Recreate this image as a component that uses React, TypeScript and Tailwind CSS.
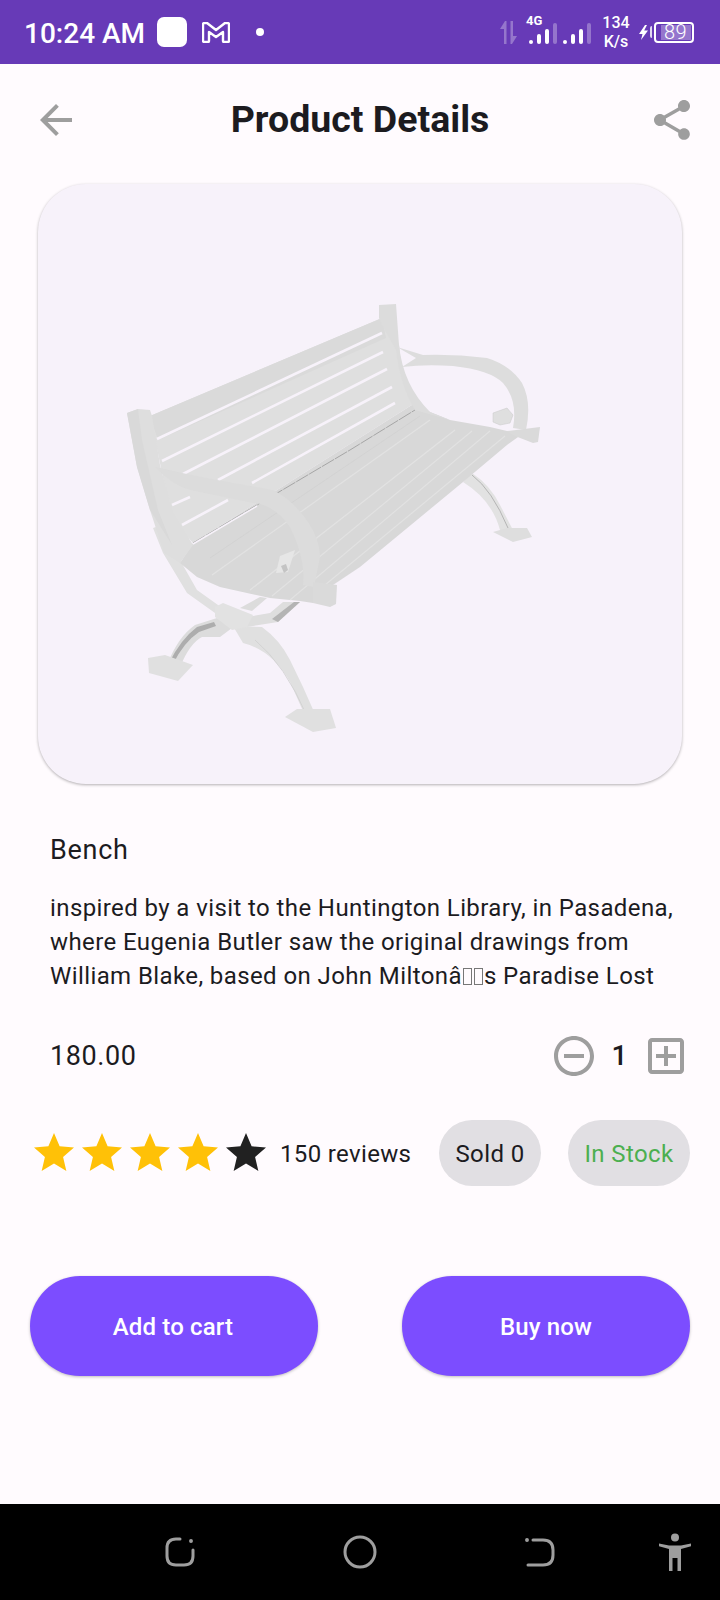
function Bench() {
  return (
    <svg viewBox="38 184 644 600" className="block w-full h-full">
      {/* far leg */}
      <path d="M463 482 L472 473 Q490 485 500 505 L514 532 L500 530 Q492 500 463 482Z" fill="#e2e2e2" />
      <path d="M472 475 Q492 490 508 528" fill="none" stroke="#a8a8a8" strokeWidth="0.8" />
      <path d="M493 532 L507 528 L527 528 L532 537 L513 542Z" fill="#dedede" />
      {/* back struts and front legs */}
      <path d="M153 528 L163 553 L187 593 L215 613 L225 610 L197 590 L180 560 L162 525Z" fill="#e0e0e0" />
      <path d="M240 608 L260 597 L267 598 L252 611Z" fill="#dcdcdc" />
      <path d="M247 617 L270 613 L283 602 L300 602 L278 622 L247 627Z" fill="#dedede" />
      <path d="M278 622 L300 602 L294 602 L272 619Z" fill="#b4b4b4" />
      <path d="M217 618 L195 625 Q178 637 168 663 L180 667 Q190 643 202 637 L220 637 L232 628Z" fill="#dcdcdc" />
      <path d="M214 622 L197 627 Q181 639 169 663 L173 664 Q184 642 199 632 L216 626Z" fill="#adadad" />
      <path d="M148 658 L165 655 L193 665 L178 681 L149 673Z" fill="#e0e0e0" />
      <path d="M233 626 L262 627 Q280 640 290 660 L303 687 L315 714 L307 720 L290 682 Q272 650 243 643Z" fill="#e0e0e0" />
      <path d="M255 640 Q285 665 307 716" fill="none" stroke="#cfcfcf" strokeWidth="0.8" />
      <path d="M285 717 L297 709 L330 709 L336 728 L313 732Z" fill="#e0e0e0" />
      <path d="M215 607 L223 603 L253 615 L247 627 L232 630 L215 617Z" fill="#e2e2e2" />
      {/* seat */}
      <path d="M193 543 L415 403 L430 412 L450 420 L490 427 L507 431 L525 432 L507 445 L463 482 L360 567 L333 585 L313 603 L300 601 L270 598 L220 587 L197 577 L180 563Z" fill="#d8d8d8" />
      <g stroke="#e2e2e2" strokeWidth="1.2" fill="none">
        <path d="M212 575 L430 420" />
        <path d="M250 590 L455 430" />
        <path d="M272 596 L472 431" />
        <path d="M290 600 L490 431" />
        <path d="M325 585 L505 436" />
      </g>
      <path d="M210 558 L420 416" fill="none" stroke="#d0d0d0" strokeWidth="0.8" />
      {/* backrest */}
      <path d="M150 416 L382 318 L399 345 L402 370 L415 403 L193 543 L172 520 Z" fill="#dfdfdf" />
      <path d="M150 416 L382 318 L386 338 L158 440Z" fill="#dadada" />
      <g stroke="#f7f2fa" fill="none" strokeWidth="2.6">
        <path d="M157 439 L382 333" />
        <path d="M162 461 L383 352" />
        <path d="M183 474 L387 369" />
        <path d="M218 480 L392 387" />
        <path d="M252 483 L395 403" />
        <path d="M172 505 L190 497" />
        <path d="M182 525 L228 500" />
      </g>
      <path d="M193 543 L257 505 L350 450 L415 410" fill="none" stroke="#8f8f8f" strokeWidth="0.7" strokeDasharray="14 1" />
      <path d="M193 544 L257 506" fill="none" stroke="#f7f2fa" strokeWidth="1.5" />
      {/* side posts */}
      <path d="M379 305 L396 304 L399 345 Q403 385 430 412 L450 420 L415 410 Q400 385 396 350 L382 325 L379 318Z" fill="#dcdcdc" />
      <path d="M127 413 L138 409 L150 410 L152 416 L156 440 L160 465 L172 510 L193 545 L180 563 L164 553 L150 510 L137 467Z" fill="#dedede" />
      <path d="M127 413 L138 409 L142 440 L158 510 L172 545 L150 510 L137 467Z" fill="#d9d9d9" />
      {/* far arm */}
      <path d="M397 347 L423 355 Q455 354 487 358 Q510 365 522 383 Q532 402 526 430 L513 428 Q518 400 503 383 Q490 370 453 366 Q425 364 402 367 L416 358Z" fill="#dddddd" />
      <path d="M507 431 L540 427 L538 442 L533 443 L515 436Z" fill="#dadada" />
      <path d="M493 413 L507 408 L513 415 L510 423 L500 425 L493 422Z" fill="#dfdfdf" stroke="#c9c9c9" strokeWidth="0.5" />
      {/* near arm */}
      <path d="M155 467 L182 473 L217 480 L273 490 Q293 500 308 522 Q320 540 320 557 L314 587 L303 585 Q306 560 290 527 Q275 505 253 503 L190 490 Q172 485 155 467Z" fill="#dcdcdc" />
      <path d="M280 556 L295 550 L288 572 L276 573Z" fill="#e6e6e6" />
      <path d="M281 566 L286 564 L288 570 L284 573Z" fill="#c4c4c4" />
      <path d="M313 582 L337 585 L336 604 L330 607 L313 603Z" fill="#dadada" />
    </svg>
  )
}

function Signal({ label }: { label?: string }) {
  return (
    <div className="relative w-7 h-6 flex items-end justify-between">
      {label && <span className="absolute left-[-3px] top-[-6px] text-[13px] font-bold leading-[14px]">{label}</span>}
      <div className="w-1 h-1 rounded-full bg-white" />
      <div className="w-1 h-[10px] rounded-full bg-white" />
      <div className="w-1 h-[15px] rounded-full bg-white" />
      <div className="w-1 h-[21px] rounded-full bg-white/30" />
    </div>
  )
}

function StatusBar() {
  return (
    <div className="h-16 bg-[#673ab7] flex items-center text-white pl-[24px] pr-[26px]">
      <span className="text-[28px] font-medium leading-none w-[133px] pt-[3px]">10:24 AM</span>
      <div className="w-[30px] h-[30px] rounded-[7px] bg-white" />
      <svg viewBox="0 0 28 21" className="w-7 h-[21px] ml-[15px]" fill="none" stroke="white" strokeWidth="2.4" strokeLinejoin="round">
        <path d="M1 2 C1 1 2 1 3 1 H5 L14 8 L23 1 H25 C26 1 27 1 27 2 V19 C27 20 26 20 25 20 H22 C21 20 21 19 21 19 V10 L14 15 L7 10 V19 C7 19 7 20 6 20 H3 C2 20 1 20 1 19Z" />
      </svg>
      <div className="w-2 h-2 rounded-full bg-white ml-[26px]" />
      <div className="flex-1" />
      <svg viewBox="0 0 17 23" className="w-[17px] h-[23px] opacity-30" fill="white">
        <path d="M0 8 L5 0 L6.5 0 V23 H4 V8Z" />
        <path d="M17 15 L12 23 L10.5 23 V0 H13 V15Z" />
      </svg>
      <div className="ml-3">
        <Signal label="4G" />
      </div>
      <div className="ml-[6px]">
        <Signal />
      </div>
      <div className="flex flex-col items-center ml-3 text-[16px] font-medium leading-[19px] w-[26px]">
        <span>134</span>
        <span>K/s</span>
      </div>
      <svg viewBox="0 0 9 15" className="w-[9px] h-[15px] ml-[10px]" fill="white">
        <path d="M6 0 L0 9 H3.5 L2 15 L9 5.5 H5.2 L8 0Z" />
      </svg>
      <div className="w-[2px] h-3 bg-white/80 ml-[2px] rounded-l-sm" />
      <div className="w-10 h-[21px] ml-[2px] rounded-[4px] border-2 border-white flex items-center pl-[5px] pr-[1px] py-[1px]">
        <div className="w-full h-full bg-[#9575cd] flex items-center pl-[3px] text-[20px] leading-none tracking-[0.5px] font-light">89</div>
      </div>
    </div>
  )
}

function Star({ color }: { color: string }) {
  return (
    <svg viewBox="0 0 24 24" className={`w-12 h-12 ${color}`} fill="currentColor">
      <path d="M12 17.27L18.18 21l-1.64-7.03L22 9.24l-7.19-.61L12 2 9.19 8.63 2 9.24l5.46 4.73L5.82 21z" />
    </svg>
  )
}

function Tofu() {
  return <span className="inline-block w-[9px] h-[17px] border border-[#777] mx-[1px] align-[-1px]" />
}

function BottomNav() {
  return (
    <div className="h-24 bg-black flex items-center pl-[164px] text-[#9e9e9e]">
      <svg viewBox="0 0 32 32" className="w-8 h-8" fill="none" stroke="currentColor" strokeWidth="3" strokeLinecap="round">
        <path d="M16 3 H12 Q3 3 3 12 V20 Q3 29 12 29 H20 Q29 29 29 20 V14" />
        <circle cx="27" cy="5" r="1.2" fill="currentColor" strokeWidth="1.5" />
      </svg>
      <svg viewBox="0 0 34 34" className="w-[34px] h-[34px] ml-[147px]" fill="none" stroke="currentColor" strokeWidth="3">
        <circle cx="17" cy="17" r="15" />
      </svg>
      <svg viewBox="0 0 32 32" className="w-8 h-8 ml-[147px]" fill="none" stroke="currentColor" strokeWidth="3" strokeLinecap="round">
        <path d="M9 4 H19 Q29 4 29 14 V19 Q29 29 19 29 H4" />
        <circle cx="3" cy="4" r="1.2" fill="currentColor" strokeWidth="1.5" />
      </svg>
      <svg viewBox="0 0 32 38" className="w-8 h-[38px] ml-[103px]" fill="currentColor">
        <circle cx="16" cy="4.5" r="4" />
        <path d="M0 10.5 L10 12.5 H22 L32 10.5 L32.5 13 L22 16 V38 H18.5 V25 H13.5 V38 H10 V16 L-0.5 13Z" />
      </svg>
    </div>
  )
}

export default function App() {
  return (
    <div className="w-[720px] h-[1600px] bg-[#fffbfe] flex flex-col font-['Roboto',sans-serif] text-[#1c1b1f] overflow-hidden">
      <StatusBar />

      <div className="h-[120px] flex items-center justify-between pl-8 pr-6 pb-2 text-[#9e9e9e]">
        <svg viewBox="0 0 24 24" className="w-12 h-12" fill="currentColor">
          <path d="M20 11H7.83l5.59-5.59L12 4l-8 8 8 8 1.41-1.41L7.83 13H20v-2z" />
        </svg>
        <h1 className="text-[37.5px] font-bold text-[#1c1b1f] leading-none mr-2">Product Details</h1>
        <svg viewBox="0 0 24 24" className="w-12 h-12" fill="currentColor">
          <path d="M18 16.08c-.76 0-1.44.3-1.96.77L8.91 12.7c.05-.23.09-.46.09-.7s-.04-.47-.09-.7l7.05-4.11c.54.5 1.25.81 2.04.81 1.66 0 3-1.34 3-3s-1.34-3-3-3-3 1.34-3 3c0 .24.04.47.09.7L8.04 9.81C7.5 9.31 6.79 9 6 9c-1.66 0-3 1.34-3 3s1.34 3 3 3c.79 0 1.5-.31 2.04-.81l7.12 4.16c-.05.21-.08.43-.08.65 0 1.61 1.31 2.92 2.92 2.92 1.61 0 2.92-1.31 2.92-2.92s-1.31-2.92-2.92-2.92z" />
        </svg>
      </div>

      <div className="ml-[38px] w-[644px] h-[600px] rounded-[48px] bg-[#f7f2fa] shadow-[0_1px_3px_rgba(0,0,0,0.3)] overflow-hidden">
        <Bench />
      </div>

      <div className="pl-[50px] pt-[48px]">
        <h2 className="text-[27px] font-[450] leading-[36px] tracking-[0.7px]">Bench</h2>
        <p className="mt-[23px] text-[24px] leading-[34px] tracking-[0.4px] whitespace-nowrap">
          inspired by a visit to the Huntington Library, in Pasadena,
          <br />
          where Eugenia Butler saw the original drawings from
          <br />
          William Blake, based on John Miltonâ<Tofu /><Tofu />s Paradise Lost
        </p>
      </div>

      <div className="flex items-center justify-between pl-[50px] pr-[30px] mt-[39px] h-12">
        <span className="text-[27px] font-[450] tracking-[0.6px]">180.00</span>
        <div className="flex items-center text-[#9e9e9e]">
          <svg viewBox="0 0 24 24" className="w-12 h-12" fill="currentColor">
            <path d="M7 11v2h10v-2H7zm5-9C6.48 2 2 6.48 2 12s4.48 10 10 10 10-4.48 10-10S17.52 2 12 2zm0 18c-4.41 0-8-3.59-8-8s3.59-8 8-8 8 3.59 8 8-3.59 8-8 8z" />
          </svg>
          <span className="w-11 pr-[1px] text-center text-[28px] font-medium text-[#1c1b1f]">1</span>
          <svg viewBox="0 0 24 24" className="w-12 h-12" fill="currentColor">
            <path d="M19 3H5c-1.11 0-2 .9-2 2v14c0 1.1.89 2 2 2h14c1.1 0 2-.9 2-2V5c0-1.1-.9-2-2-2zm0 16H5V5h14v14zM13 7h-2v4H7v2h4v4h2v-4h4v-2h-4z" />
          </svg>
        </div>
      </div>

      <div className="flex items-center pl-[30px] mt-[40px] h-[66px]">
        <Star color="text-[#ffc107]" />
        <Star color="text-[#ffc107]" />
        <Star color="text-[#ffc107]" />
        <Star color="text-[#ffc107]" />
        <Star color="text-[#212121]" />
        <span className="ml-[10px] w-[159px] pt-[1px] text-[24px] tracking-[0.35px]">150 reviews</span>
        <div className="w-[102px] h-[66px] pt-[1px] rounded-[33px] bg-[#e1dfe3] flex items-center justify-center text-[24px] tracking-[0.4px]">Sold 0</div>
        <div className="ml-[27px] w-[122px] h-[66px] pt-[1px] rounded-[33px] bg-[#e1dfe3] flex items-center justify-center text-[24px] tracking-[0.4px] text-[#4caf50]">In Stock</div>
      </div>

      <div className="flex justify-between pl-[30px] pr-[30px] mt-[90px]">
        <button className="w-[288px] h-[100px] rounded-[50px] bg-[#7c4dff] text-white text-[24px] font-medium tracking-[0.15px] pt-[1px] pr-[2px] shadow-[0_1px_3px_rgba(0,0,0,0.25)]">Add to cart</button>
        <button className="w-[288px] h-[100px] rounded-[50px] bg-[#7c4dff] text-white text-[24px] font-medium tracking-[0.15px] pt-[1px] shadow-[0_1px_3px_rgba(0,0,0,0.25)]">Buy now</button>
      </div>

      <div className="flex-1" />
      <BottomNav />
    </div>
  )
}
